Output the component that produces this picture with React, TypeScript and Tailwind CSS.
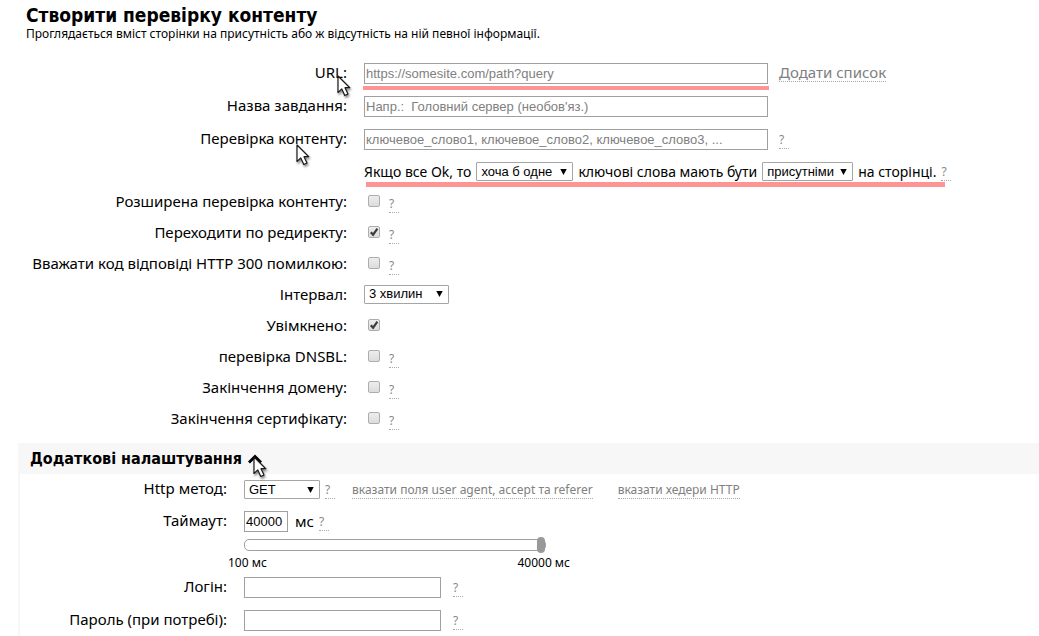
import React, { useState } from 'react';

interface HelpProps {
  className?: string;
}

const Help: React.FC<HelpProps> = ({ className = '' }) => (
  <a
    href="#help"
    className={`inline-block w-[10px] border-b border-dotted border-[#aaa] text-[12px] leading-4 text-[#888] ${className}`}
  >
    ?
  </a>
);

interface SelectProps {
  id: string;
  label: string;
  options: string[];
  className?: string;
}

const Select: React.FC<SelectProps> = ({ id, label, options, className = '' }) => (
  <span className={`grid h-[19px] items-center ${className}`}>
    <select
      id={id}
      aria-label={label}
      className="col-start-1 row-start-1 h-[19px] w-full appearance-none rounded-[1px] border border-[#a5a5a5] bg-white pl-1 font-['Liberation_Sans',Arial,sans-serif] text-[13px] leading-4 text-black"
    >
      {options.map(o => <option key={o}>{o}</option>)}
    </select>
    <svg viewBox="0 0 7 6" className="pointer-events-none col-start-1 row-start-1 mr-[6px] h-[6px] w-[7px] justify-self-end">
      <path d="M0.3 0h6.4L3.5 6z" fill="#000" />
    </svg>
  </span>
);

interface CheckProps {
  id: string;
  checked?: boolean;
}

const Check: React.FC<CheckProps> = ({ id, checked = false }) => (
  <span className="mb-[3px] ml-1 grid h-[12px] w-[12px]">
    <input
      id={id}
      type="checkbox"
      defaultChecked={checked}
      className="peer col-start-1 row-start-1 h-[12px] w-[12px] appearance-none rounded-[2px] border border-[#adadad] bg-gradient-to-b from-[#ededed] to-[#dcdcdc]"
    />
    <svg viewBox="0 0 12 12" className="pointer-events-none invisible col-start-1 row-start-1 h-[12px] w-[12px] peer-checked:visible">
      <path d="M2.8 6.2l2.3 2.5 4.3-6" fill="none" stroke="#3c3c3c" strokeWidth="2.2" />
    </svg>
  </span>
);

// Arrow pointer laid over the form as a walkthrough marker
const Pointer: React.FC<{ className: string }> = ({ className }) => (
  <svg viewBox="0 0 18 26" className={`pointer-events-none absolute h-[26px] w-[18px] drop-shadow-[1px_2px_1px_rgba(0,0,0,0.45)] ${className}`}>
    <path
      d="M1 1v16.5l3.8-3.6 3 6.6 3.2-1.5-3-6.3h4.8z"
      fill="#fff"
      stroke="#1a1a1a"
      strokeWidth="1.2"
      strokeLinejoin="round"
    />
  </svg>
);

interface RowProps {
  label: string;
  htmlFor: string;
  tall?: boolean;
  inner?: boolean;
  pointer?: React.ReactNode;
  children: React.ReactNode;
}

const Row: React.FC<RowProps> = ({ label, htmlFor, tall = false, inner = false, pointer, children }) => (
  <div className={`flex items-center ${tall ? 'h-[33px]' : 'h-[31px]'}`}>
    <div className={`relative shrink-0 pb-1 text-right ${inner ? 'w-[207px]' : 'w-[347px]'}`}>
      <label htmlFor={htmlFor} className="text-[15px] leading-5">{label}</label>
      {pointer}
    </div>
    <div className="ml-[17px] flex items-center">{children}</div>
  </div>
);

const TEXT_FIELD = "h-[21px] rounded-none border border-[#a0a0a0] bg-white px-px font-['Liberation_Sans',Arial,sans-serif] text-[13px] leading-4 text-black placeholder:text-[#808080]";
const SMALL_LINK = 'mt-px border-b border-dotted border-[#aaa] text-[12px] leading-4 text-[#808080]';

const CHECKS = [
  { id: 'advanced', label: 'Розширена перевірка контенту:' },
  { id: 'redirect', label: 'Переходити по редиректу:', checked: true },
  { id: 'http300', label: 'Вважати код відповіді HTTP 300 помилкою:' },
];

const EXPIRY_CHECKS = [
  { id: 'dnsbl', label: 'перевірка DNSBL:' },
  { id: 'domain', label: 'Закінчення домену:' },
  { id: 'certificate', label: 'Закінчення сертифікату:' },
];

const App: React.FC = () => {
  const [timeout, setTimeoutMs] = useState('40000');

  return (
    <main className="overflow-hidden bg-white font-['Noto_Sans',sans-serif] text-black">
      <header className="pt-[5px] pl-[26px]">
        <h1 className="font-['DejaVu_Sans_Condensed','DejaVu_Sans',sans-serif] text-[19px] leading-[21px] font-bold">Створити перевірку контенту</h1>
        <p className="text-[12px] leading-4">
          Проглядається вміст сторінки на присутність або ж відсутність на ній певної інформації.
        </p>
      </header>

      <form className="pt-[15px]">
        <Row label="URL:" htmlFor="url" tall pointer={<Pointer className="top-[15px] right-[-8px]" />}>
          <div className="relative">
            <input id="url" type="text" placeholder="https://somesite.com/path?query" className={`block w-[404px] ${TEXT_FIELD}`} />
            <span className="absolute inset-x-[-1px] top-[23px] h-[4px] bg-[#ff9494]" />
          </div>
          <a href="#list" className="mb-[2px] ml-[11px] border-b border-dotted border-[#aaa] text-[15px] leading-[17px] text-[#808080]">Додати список</a>
        </Row>
        <Row label="Назва завдання:" htmlFor="name" tall>
          <input id="name" type="text" placeholder="Напр.:  Головний сервер (необов'яз.)" className={`w-[404px] ${TEXT_FIELD}`} />
        </Row>
        <Row label="Перевірка контенту:" htmlFor="content" tall pointer={<Pointer className="top-[18px] right-[33px]" />}>
          <input id="content" type="text" placeholder="ключевое_слово1, ключевое_слово2, ключевое_слово3, ..." className={`w-[404px] ${TEXT_FIELD}`} />
          <Help className="mt-px ml-[11px]" />
        </Row>

        <div className="flex h-[31px] items-center pl-[364px]">
          <div className="relative flex items-center gap-[5px] text-[14px] leading-5 whitespace-nowrap">
            <span>Якщо все Ok, то</span>
            <Select id="amount" label="Кількість ключових слів" options={['хоча б одне', 'усі']} className="w-[97px]" />
            <span>ключові слова мають бути</span>
            <Select id="presence" label="Присутність" options={['присутніми', 'відсутніми']} className="w-[91px]" />
            <span>на сторінці.</span>
            <Help className="mt-px" />
            <span className="absolute top-[20px] right-[6px] left-[2px] h-[5px] bg-[#ff9494]" />
          </div>
        </div>

        {CHECKS.map(c => (
          <Row key={c.id} label={c.label} htmlFor={c.id}>
            <Check id={c.id} checked={c.checked} />
            <Help className="mt-[3px] ml-[9px]" />
          </Row>
        ))}
        <Row label="Інтервал:" htmlFor="interval">
          <Select id="interval" label="Інтервал" options={['3 хвилин', '5 хвилин', '10 хвилин']} className="mb-[3px] w-[85px]" />
        </Row>
        <Row label="Увімкнено:" htmlFor="enabled">
          <Check id="enabled" checked />
        </Row>
        {EXPIRY_CHECKS.map(c => (
          <Row key={c.id} label={c.label} htmlFor={c.id}>
            <Check id={c.id} />
            <Help className="mt-[3px] ml-[9px]" />
          </Row>
        ))}

        {/* Additional settings */}
        <section className="mt-2 ml-[18px] border-l-2 border-[#f7f7f7] pb-4">
          <div className="flex h-[31px] items-center bg-[#f7f7f7] pl-[10px]">
            <button type="button" className="relative flex items-center gap-[6px] font-['DejaVu_Sans_Condensed','DejaVu_Sans',sans-serif] text-[16px] leading-5 font-bold">
              Додаткові налаштування
              <svg viewBox="0 0 14 10" className="h-[10px] w-[14px]">
                <path d="M1 8.5l6-6 6 6" fill="none" stroke="#000" strokeWidth="2.8" />
              </svg>
              <Pointer className="top-[7px] right-[-9px]" />
            </button>
          </div>

          <Row label="Http метод:" htmlFor="method" inner>
            <Select id="method" label="Http метод" options={['GET', 'POST', 'HEAD']} className="w-[76px]" />
            <Help className="mt-px ml-[5px]" />
            <a href="#agent" className={`ml-[17px] ${SMALL_LINK}`}>вказати поля user agent, accept та referer</a>
            <a href="#headers" className={`ml-[25px] ${SMALL_LINK}`}>вказати хедери HTTP</a>
          </Row>
          <Row label="Таймаут:" htmlFor="timeout" tall inner>
            <input id="timeout" type="text" value={timeout} onChange={e => setTimeoutMs(e.target.value)} className={`w-[44px] ${TEXT_FIELD}`} />
            <span className="mb-px ml-[7px] text-[15px] leading-5">мс</span>
            <Help className="mt-px ml-[5px]" />
          </Row>

          <div className="-mt-px ml-[208px] w-[342px]">
            <input
              type="range"
              aria-label="Таймаут, мс"
              min={100}
              max={40000}
              step={100}
              value={timeout}
              onChange={e => setTimeoutMs(e.target.value)}
              className="ml-4 block h-4 w-[302px] appearance-none bg-transparent [&::-webkit-slider-runnable-track]:h-[12px] [&::-webkit-slider-runnable-track]:rounded-[5px] [&::-webkit-slider-runnable-track]:border [&::-webkit-slider-runnable-track]:border-[#a0a0a0] [&::-webkit-slider-thumb]:mt-[-3px] [&::-webkit-slider-thumb]:h-4 [&::-webkit-slider-thumb]:w-[8px] [&::-webkit-slider-thumb]:appearance-none [&::-webkit-slider-thumb]:rounded-[4px] [&::-webkit-slider-thumb]:bg-[#999]"
            />
            <div className="mt-[2px] flex justify-between text-[12px] leading-4">
              <span>100 мс</span>
              <span>40000 мс</span>
            </div>
          </div>

          <Row label="Логін:" htmlFor="login" tall inner>
            <input id="login" type="text" className={`w-[197px] ${TEXT_FIELD}`} />
            <Help className="mt-px ml-[12px]" />
          </Row>
          <Row label="Пароль (при потребі):" htmlFor="password" tall inner>
            <input id="password" type="password" className={`w-[197px] ${TEXT_FIELD}`} />
            <Help className="mt-px ml-[12px]" />
          </Row>
        </section>
      </form>
    </main>
  );
};

export default App;
